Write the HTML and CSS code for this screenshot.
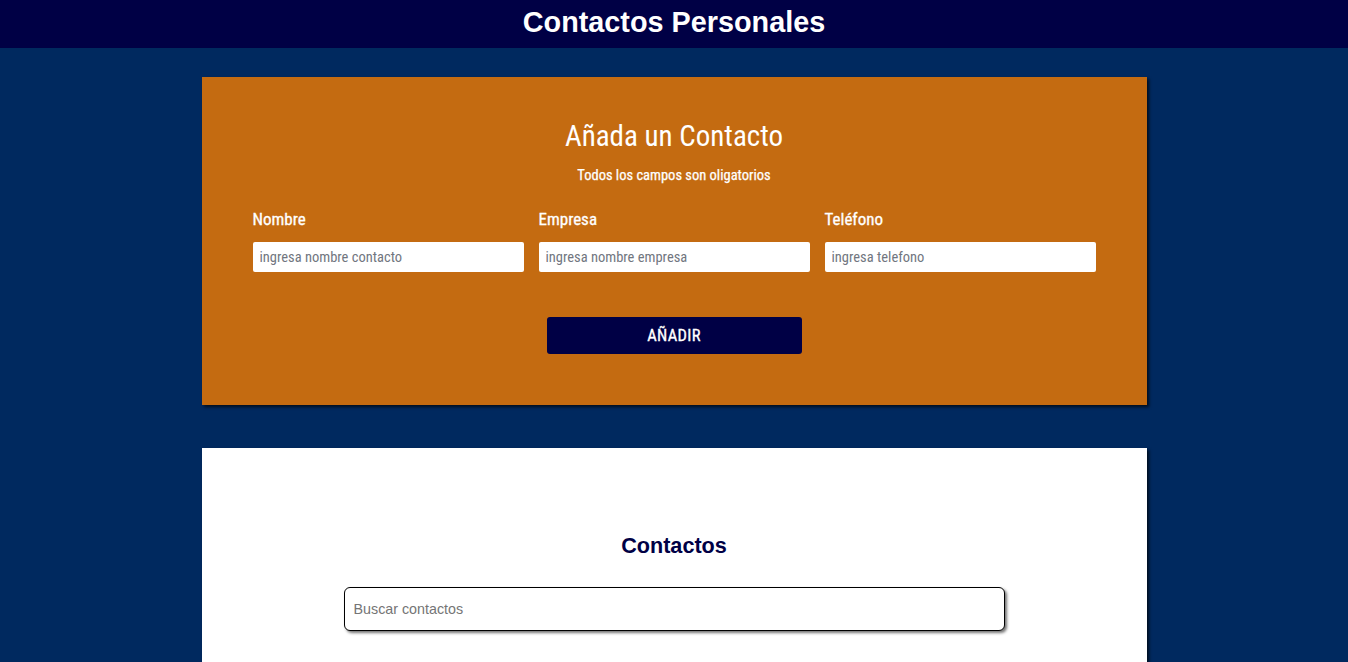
FILE: index.html
```html
<!DOCTYPE html>
<html lang="es">
<head>
<meta charset="utf-8">
<title>Contactos Personales</title>
<link rel="stylesheet" href="styles.css">
</head>
<body>
<header class="top-bar">
  <h1 class="top-title">Contactos Personales</h1>
</header>
<main class="page">
  <section class="card card-form">
    <h2 class="form-title">Añada un Contacto</h2>
    <p class="form-note">Todos los campos son oligatorios</p>
    <form class="form">
      <div class="fields">
        <div class="field">
          <label class="label" for="nombre">Nombre</label>
          <input class="input" id="nombre" type="text" placeholder="ingresa nombre contacto">
        </div>
        <div class="field">
          <label class="label" for="empresa">Empresa</label>
          <input class="input" id="empresa" type="text" placeholder="ingresa nombre empresa">
        </div>
        <div class="field">
          <label class="label" for="telefono">Teléfono</label>
          <input class="input" id="telefono" type="tel" placeholder="ingresa telefono">
        </div>
      </div>
      <div class="actions">
        <button class="btn" type="button">AÑADIR</button>
      </div>
    </form>
  </section>
  <section class="card card-list">
    <h2 class="list-title">Contactos</h2>
    <input class="search" type="text" placeholder="Buscar contactos">
  </section>
</main>
</body>
</html>
```
FILE: styles.css
```css
* { box-sizing: border-box; }
html, body { margin: 0; padding: 0; }
body {
  background: #00295f;
  font-family: "Liberation Sans", Arial, sans-serif;
  min-height: 100vh;
}
.top-bar {
  background: #000045;
  height: 48px;
  display: flex;
  align-items: center;
  justify-content: center;
}
.top-title {
  margin: 0;
  color: #fff;
  font-family: "Liberation Sans", Arial, sans-serif;
  font-weight: 700;
  font-size: 28.8px;
  line-height: 1;
  position: relative;
  top: -2px;
}
.page {
  padding-top: 29px;
  display: flex;
  flex-direction: column;
  align-items: center;
  gap: 43px;
}
.card {
  width: 945px;
  box-shadow: 2px 2px 3px rgba(0,0,0,0.7);
}
.card-form {
  background: #c46b11;
  color: #fff;
  font-family: Roboto, sans-serif;
  font-stretch: condensed;
  padding: 42px 51px 51px;
  height: 328px;
}
.form-title {
  margin: 0;
  text-align: center;
  font-weight: 400;
  font-size: 29px;
  line-height: 34px;
}
.form-note {
  margin: 14px 0 0;
  text-align: center;
  font-size: 14.5px;
  font-weight: 400;
  line-height: 18px;
  -webkit-text-stroke: 0.25px #fff;
}
.fields {
  margin-top: 24px;
  display: grid;
  grid-template-columns: repeat(3, 1fr);
  gap: 15px;
}
.field {
  display: flex;
  flex-direction: column;
}
.label {
  font-size: 17px;
  font-weight: 400;
  line-height: 20px;
  margin-bottom: 13px;
  -webkit-text-stroke: 0.3px #fff;
}
.input {
  height: 30px;
  border: none;
  border-radius: 2px;
  background: #fff;
  padding: 0 7px;
  font-family: Roboto, sans-serif;
  font-stretch: condensed;
  font-size: 14.5px;
  color: #333;
  outline: none;
}
.input::placeholder { color: #717680; }
.actions {
  margin-top: 45px;
  display: flex;
  justify-content: center;
}
.btn {
  width: 255px;
  height: 37px;
  border: none;
  border-radius: 3px;
  background: #000045;
  color: #fff;
  font-family: Roboto, sans-serif;
  font-stretch: condensed;
  font-size: 16.5px;
  font-weight: 400;
  letter-spacing: 0.3px;
  -webkit-text-stroke: 0.3px #fff;
  cursor: pointer;
}
.card-list {
  background: #fff;
  min-height: 260px;
  padding-top: 84px;
  display: flex;
  flex-direction: column;
  align-items: center;
}
.list-title {
  margin: 0;
  color: #000045;
  font-size: 21.6px;
  font-weight: 700;
  line-height: 28px;
}
.search {
  margin-top: 27px;
  width: 661px;
  height: 44px;
  border: 1px solid #000;
  border-radius: 6px;
  box-shadow: 2px 2px 3px rgba(0,0,0,0.55);
  padding: 0 9px;
  font-family: "Liberation Sans", Arial, sans-serif;
  font-size: 14.3px;
  outline: none;
}
.search::placeholder { color: #757575; }
```
